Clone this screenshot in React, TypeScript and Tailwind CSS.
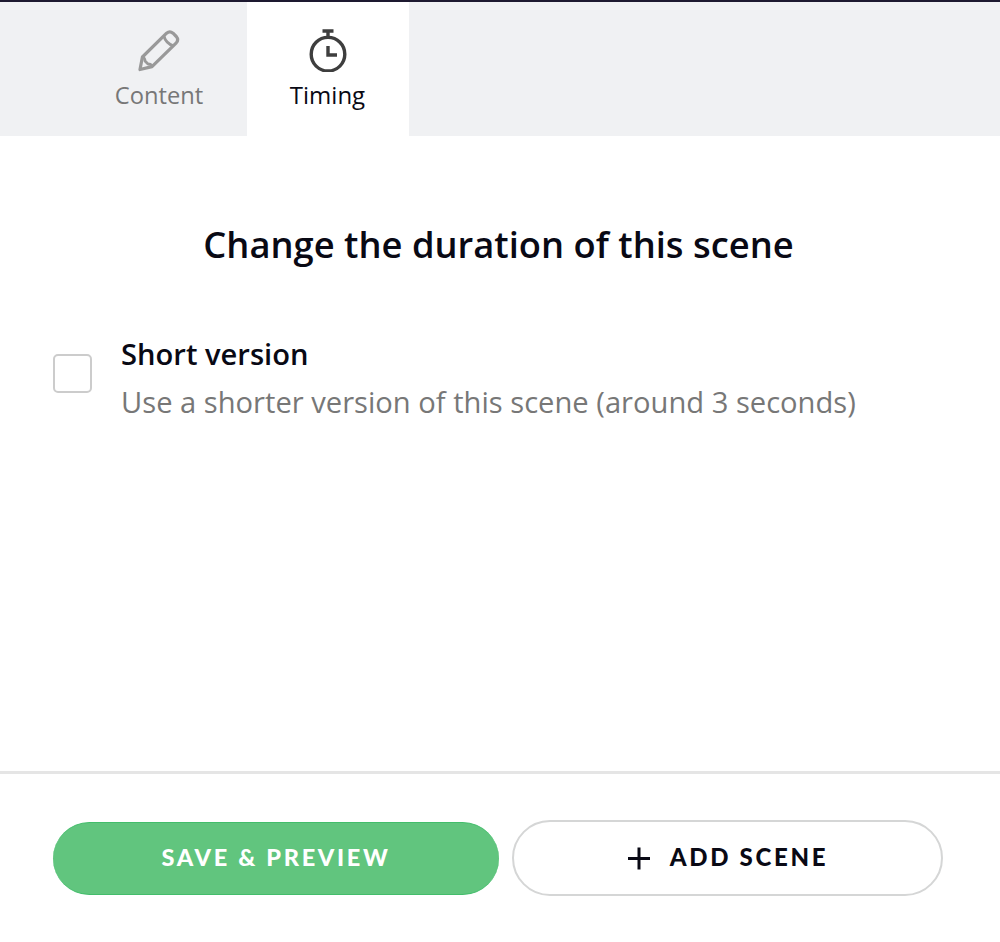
export default function App() {
  return (
    <div className="flex h-[942px] w-[1000px] flex-col overflow-hidden bg-white font-['Open_Sans','Noto_Sans',sans-serif] text-[#090914]">
      <nav className="flex h-[136px] shrink-0 border-t-2 border-[#1d1930] bg-[#f0f1f3] pl-[71px] text-2xl">
        <button className="flex w-44 flex-col items-center pt-[26px] text-[#777777]">
          <svg width="44" height="44" viewBox="0 0 44 44" fill="none" stroke="#999999" strokeWidth="3.2" strokeLinejoin="round">
            <path d="M3 41.5 5.4 29 29.6 5.2Q32.8 2.4 36 5.2L39.3 8.5Q42 11.7 39.3 14.8L15 38.6Z" />
            <path d="M26.8 8 Q29 15.5 36.4 17.8M5.4 29Q8 30 8 33L11 36Q14.5 36 15 38.6" strokeWidth="2.8" />
          </svg>
          <span className="mt-1 text-[23.7px] leading-[38px]">Content</span>
        </button>
        <button className="flex w-[162px] flex-col items-center bg-white pr-px pt-[26px] text-[#090914]">
          <svg width="44" height="44" viewBox="0 0 44 44" fill="none" stroke="#3e3e3e" strokeWidth="3.4">
            <circle cx="22" cy="26.2" r="16.8" />
            <path d="M16.5 3H27.5M22 3V9.5M22 18V27H31" />
          </svg>
          <span className="mt-1 leading-[38px]">Timing</span>
        </button>
      </nav>
      <main className="flex h-[635px] shrink-0 flex-col px-[53px] pt-[82px]">
        <h1 className="whitespace-nowrap pr-[3px] text-center text-[36.35px] font-semibold leading-[52px]">Change the duration of this scene</h1>
        <label className="mt-[60px] flex">
          <input type="checkbox" className="mt-6 size-[39px] shrink-0 appearance-none rounded-[5px] border-2 border-[#cccccc] bg-white" />
          <span className="ml-[29px] flex flex-col whitespace-nowrap text-[29.15px]">
            <strong className="font-semibold leading-[48px]">Short version</strong>
            <span className="leading-[48px] text-[#777777]">Use a shorter version of this scene (around 3 seconds)</span>
          </span>
        </label>
      </main>
      <footer className="flex flex-1 items-start gap-[13px] border-t-[3px] border-[#e5e5e5] pl-[53px] pt-[46px] font-['Lato',sans-serif] text-2xl font-black tracking-[2.7px]">
        <button className="mt-0.5 h-[73px] w-[446px] rounded-full border-y border-[#43bd6b] bg-[#61c57e] pb-0.5 text-[23.5px] text-white">SAVE &amp; PREVIEW</button>
        <button className="flex h-[76px] w-[431px] items-center justify-center gap-[19px] rounded-full border-2 border-[#d5d6d6] bg-white pb-0.5">
          <svg className="mt-0.5" width="24" height="24" viewBox="0 0 24 24" fill="none" stroke="#090914" strokeWidth="3">
            <path d="M1 12.5H23M12 1.5V23.5" />
          </svg>
          <span>ADD SCENE</span>
        </button>
      </footer>
    </div>
  );
}
